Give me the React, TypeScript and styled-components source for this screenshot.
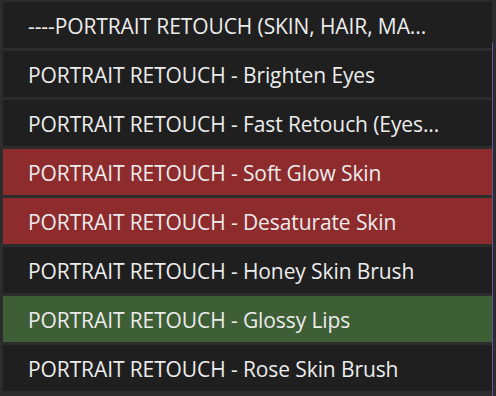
import React from "react";
import styled, { createGlobalStyle } from "styled-components";

const Global = createGlobalStyle`
  html, body { margin: 0; padding: 0; background: #2c2c2c; }
  body { width: 496px; height: 396px; overflow: hidden; }
`;

type Tone = "plain" | "red" | "green";

const toneBg: Record<Tone, string> = {
  plain: "#1f1f1f",
  red: "#8d2b2d",
  green: "#3e5e36",
};

const Panel = styled.div`
  position: relative;
  box-sizing: border-box;
  width: 496px;
  height: 396px;
  background: #2c2c2c;
  padding: 2px 4px 0 3px;
  display: flex;
  flex-direction: column;
  gap: 3px;
`;

const Row = styled.div<{ $tone: Tone }>`
  height: 46px;
  flex: 0 0 46px;
  background: ${(p) => toneBg[p.$tone]};
  display: flex;
  align-items: center;
  padding-left: 25px;
  padding-top: 1px;
  box-sizing: border-box;
  font-family: "Open Sans", "Noto Sans", sans-serif;
  font-size: 21px;
  letter-spacing: -0.1px;
  color: #ececec;
  white-space: nowrap;
  overflow: hidden;
`;

const ScrollLine = styled.div`
  position: absolute;
  right: 3px;
  top: 43px;
  bottom: 0;
  width: 1px;
  background: #6a4f9e;
`;

const items: { label: string; tone: Tone }[] = [
  { label: "----PORTRAIT RETOUCH (SKIN, HAIR, MA...", tone: "plain" },
  { label: "PORTRAIT RETOUCH - Brighten Eyes", tone: "plain" },
  { label: "PORTRAIT RETOUCH - Fast Retouch (Eyes...", tone: "plain" },
  { label: "PORTRAIT RETOUCH - Soft Glow Skin", tone: "red" },
  { label: "PORTRAIT RETOUCH - Desaturate Skin", tone: "red" },
  { label: "PORTRAIT RETOUCH - Honey Skin Brush", tone: "plain" },
  { label: "PORTRAIT RETOUCH - Glossy Lips", tone: "green" },
  { label: "PORTRAIT RETOUCH - Rose Skin Brush", tone: "plain" },
];

export default function App() {
  return (
    <>
      <Global />
      <Panel>
        {items.map((it, i) => (
          <Row key={i} $tone={it.tone}>
            {it.label}
          </Row>
        ))}
        <ScrollLine />
      </Panel>
    </>
  );
}
